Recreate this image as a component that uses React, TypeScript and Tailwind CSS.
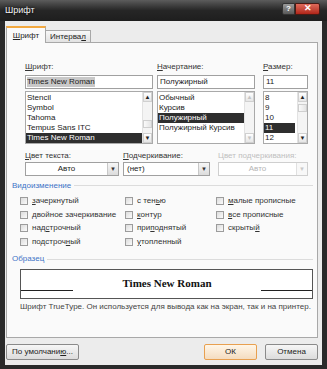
import React from 'react';

const sans = "font-['Liberation_Sans',Arial,sans-serif]";

function U({ children }: { children: React.ReactNode }) {
  return <span className="underline underline-offset-1">{children}</span>;
}

function ScrollBar({ thumb, disabled }: { thumb?: string; disabled?: boolean }) {
  const arrow = disabled ? 'text-[#c4c4c4]' : 'text-[#222]';
  return (
    <div className="w-[10px] flex flex-col bg-[#f4f4f4] border-l border-[#e2e2e2]">
      <div className={`h-[10px] flex items-center justify-center text-[6px] leading-none border border-[#d0d0d0] bg-gradient-to-b from-white to-[#e6e6e6] ${arrow}`}>▲</div>
      <div className="flex-1 flex flex-col">
        {thumb && <div className={`${thumb} h-[8px] border border-[#cfcfcf] bg-gradient-to-r from-[#fafafa] to-[#e4e4e4]`} />}
      </div>
      <div className={`h-[10px] flex items-center justify-center text-[6px] leading-none border border-[#d0d0d0] bg-gradient-to-b from-white to-[#e6e6e6] ${arrow}`}>▼</div>
    </div>
  );
}

function ListBox({ items, sel, w, thumb, disabled, selW }: { items: string[]; sel: number; w: string; thumb?: string; disabled?: boolean; selW?: string }) {
  return (
    <div className={`${w} h-[53px] mt-[2px] flex border border-[#a9a9a9] bg-white`}>
      <div className="flex-1 flex flex-col pt-[1px]">
        {items.map((t, i) => (
          <div
            key={t}
            className={`h-[10px] leading-[10px] pl-[1px] whitespace-nowrap ${i === sel ? `bg-[#2e2e2e] text-white ${selW ?? ''}` : 'text-[#222]'}`}
          >
            {t}
          </div>
        ))}
      </div>
      <ScrollBar thumb={thumb} disabled={disabled} />
    </div>
  );
}

function Combo({ w, text, center, disabled }: { w: string; text: string; center?: boolean; disabled?: boolean }) {
  return (
    <div className={`${w} h-[14px] mt-[1px] flex border ${disabled ? 'border-[#cfcfcf]' : 'border-[#a0a0a0]'} bg-white`}>
      <div className={`flex-1 leading-[12px] px-[3px] ${center ? 'text-center' : ''} ${disabled ? 'text-[#b5b5b5]' : 'text-[#222]'}`}>{text}</div>
      <div className={`w-[11px] flex items-center justify-center text-[6px] border-l ${disabled ? 'border-[#e0e0e0] text-[#c8c8c8] bg-[#f8f8f8]' : 'border-[#c8c8c8] text-[#333] bg-gradient-to-b from-[#f7f7f7] to-[#dcdcdc]'}`}>▼</div>
    </div>
  );
}

function Check({ children }: { children: React.ReactNode }) {
  return (
    <div className="h-[13.7px] flex items-center gap-[4px] text-[#333] whitespace-nowrap">
      <span className="w-[8px] h-[8px] shrink-0 border border-[#9c9c9c] bg-gradient-to-br from-[#dcdcdc] to-[#fbfbfb]" />
      <span className="leading-none">{children}</span>
    </div>
  );
}

function GroupLabel({ children, mt }: { children: React.ReactNode; mt: string }) {
  return (
    <div className={`${mt} h-[11px] flex items-center gap-[3px] pl-[5px] pr-[4px]`}>
      <span className="text-[#3d72c6] leading-none whitespace-nowrap">{children}</span>
      <div className="flex-1 h-px bg-[#dcdcdc]" />
    </div>
  );
}

function Btn({ w, children, def }: { w: string; children: React.ReactNode; def?: boolean }) {
  return (
    <div
      className={`${w} h-[16px] flex items-center justify-center rounded-[2px] border text-[#222] whitespace-nowrap ${
        def ? 'border-[#e8a050] bg-gradient-to-b from-[#fff6e8] to-[#f4dcc0]' : 'border-[#8a8a8a] bg-gradient-to-b from-[#f6f6f6] to-[#dcdcdc]'
      }`}
    >
      {children}
    </div>
  );
}

export default function App() {
  return (
    <div className={`w-[327px] h-[369px] flex flex-col bg-[#2a2a2a] text-[8px] ${sans}`}>
      {/* title bar */}
      <div className="h-[21px] flex items-start justify-between bg-gradient-to-b from-[#5c5c5c] via-[#262626] to-[#1e1e1e] pl-[5px] pr-[7px]">
        <span className="text-[#f2f2f2] text-[9px] leading-[21px] [text-shadow:0_0_3px_#000]">Шрифт</span>
        <div className="flex mt-[3px] h-[12px]">
          <div className="w-[13px] flex items-center justify-center text-white text-[8px] font-bold bg-gradient-to-b from-[#9a9a9a] to-[#5a5a5a] border border-[#333] rounded-l-[2px]">?</div>
          <div className="w-[25px] flex items-center justify-center text-white text-[9px] font-bold bg-gradient-to-b from-[#e06a5a] to-[#b02418] border border-[#4a1a14] rounded-r-[2px]">✕</div>
        </div>
      </div>

      {/* body */}
      <div className="flex-1 mx-[5px] mb-[4px] bg-[#ececec] flex flex-col pl-[1px] pr-[4px]">
        {/* tabs */}
        <div className="h-[21px] flex items-end">
          <div className="relative h-[17px] w-[40px] -mb-px bg-[#fafafa] border-x border-[#a8a8a8] border-t-2 border-t-[#f3a940] flex items-center justify-center text-[#222]">
            <span><U>Ш</U>рифт</span>
          </div>
          <div className="h-[12px] w-[45px] border-t border-r border-[#a8a8a8] bg-gradient-to-b from-[#f8f8f8] to-[#e2e2e2] flex items-center justify-center text-[#222]">
            <span>Интерва<U>л</U></span>
          </div>
        </div>

        {/* panel */}
        <div className="h-[296px] border border-[#a8a8a8] bg-[#fafafa] flex flex-col">
          <div className="flex pt-[18px] pl-[18px]">
            <div className="w-[132px] flex flex-col">
              <div className="h-[11px] leading-[11px] text-[#333]"><U>Ш</U>рифт:</div>
              <div className="w-[128px] h-[14px] mt-[3px] border border-[#a0a0a0] bg-white flex items-center px-[1px]">
                <span className="bg-[#c8c8c8] text-[#222] leading-[10px]">Times New Roman</span>
              </div>
              <ListBox w="w-[128px]" items={['Stencil', 'Symbol', 'Tahoma', 'Tempus Sans ITC', 'Times New Roman']} sel={4} thumb="mt-[18px]" />
            </div>
            <div className="w-[106px] flex flex-col">
              <div className="h-[11px] leading-[11px] text-[#333]"><U>Н</U>ачертание:</div>
              <div className="w-[98px] h-[14px] mt-[3px] border border-[#a0a0a0] bg-white leading-[12px] px-[2px] text-[#222]">Полужирный</div>
              <ListBox w="w-[98px]" items={['Обычный', 'Курсив', 'Полужирный', 'Полужирный Курсив']} sel={2} disabled selW="w-[86px]" />
            </div>
            <div className="w-[45px] flex flex-col">
              <div className="h-[11px] leading-[11px] text-[#333]"><U>Р</U>азмер:</div>
              <div className="w-[45px] h-[14px] mt-[3px] border border-[#a0a0a0] bg-white leading-[12px] px-[2px] text-[#222]">11</div>
              <ListBox w="w-[45px]" items={['8', '9', '10', '11', '12']} sel={3} thumb="mt-[2px]" selW="w-[31px]" />
            </div>
          </div>

          <div className="flex pl-[18px] mt-[6px]">
            <div className="w-[98px] flex flex-col">
              <div className="h-[11px] leading-[11px] text-[#333]"><U>Ц</U>вет текста:</div>
              <Combo w="w-[94px]" text="Авто" center />
            </div>
            <div className="w-[95px] flex flex-col">
              <div className="h-[11px] leading-[11px] text-[#333]"><U>П</U>одчеркивание:</div>
              <Combo w="w-[87px]" text="(нет)" />
            </div>
            <div className="w-[90px] flex flex-col">
              <div className="h-[11px] leading-[11px] text-[#c0c0c0] whitespace-nowrap">Цвет подчеркивания:</div>
              <Combo w="w-[90px]" text="Авто" center disabled />
            </div>
          </div>

          <GroupLabel mt="mt-[4px]">Видоизменение</GroupLabel>
          <div className="mt-[3px] pl-[13px] grid grid-cols-[105px_91px_1fr]">
            <Check><U>з</U>ачеркнутый</Check>
            <Check>с тен<U>ь</U>ю</Check>
            <Check><U>м</U>алые прописные</Check>
            <Check><U>д</U>войное зачеркивание</Check>
            <Check><U>к</U>онтур</Check>
            <Check><U>в</U>се прописные</Check>
            <Check>над<U>с</U>трочный</Check>
            <Check>при<U>п</U>однятый</Check>
            <Check>скрыты<U>й</U></Check>
            <Check>подстроч<U>н</U>ый</Check>
            <Check><U>у</U>топленный</Check>
          </div>

          <GroupLabel mt="mt-[5px]">Образец</GroupLabel>
          <div className="mt-[4px] ml-[13px] w-[293px] h-[30px] border border-[#555] bg-white flex items-center">
            <div className="w-[52px] h-[14px] border-b border-[#222]" />
            <div className="flex-1 text-center font-['Liberation_Serif','Times_New_Roman',serif] font-bold text-[11px] text-[#111] leading-none">Times New Roman</div>
            <div className="w-[51px] h-[14px] border-b border-[#222]" />
          </div>
          <div className="mt-[2px] pl-[13px] h-[11px] leading-[11px] text-[#444] text-[8px] whitespace-nowrap">
            Шрифт TrueType. Он используется для вывода как на экран, так и на принтер.
          </div>
        </div>

        {/* buttons */}
        <div className="mt-[6px] flex">
          <Btn w="w-[73px]">По умолчани<U>ю</U>...</Btn>
          <div className="flex-1" />
          <Btn w="w-[53px]" def>ОК</Btn>
          <div className="w-[8px]" />
          <Btn w="w-[53px]">Отмена</Btn>
        </div>
      </div>
    </div>
  );
}
